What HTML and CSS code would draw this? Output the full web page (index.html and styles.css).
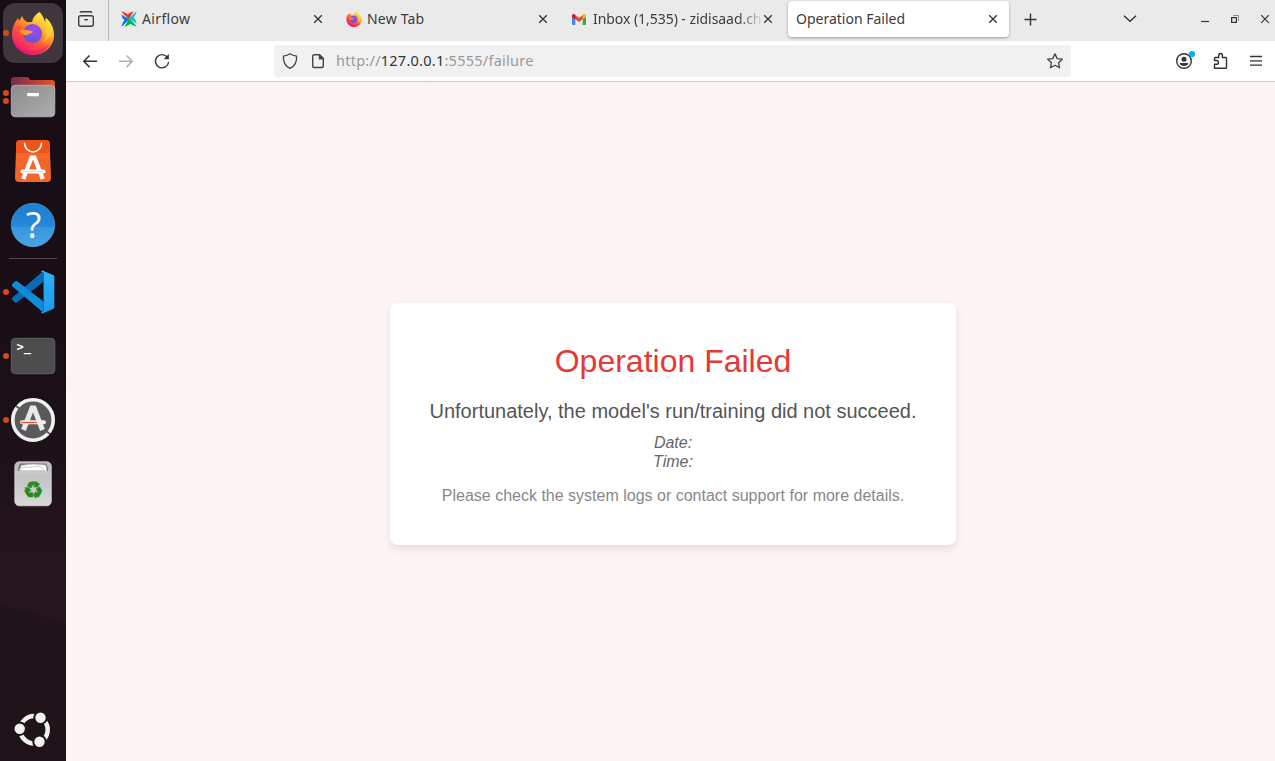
FILE: index.html
```html
<!DOCTYPE html>
<html lang="en">
<head>
<meta charset="utf-8">
<title>Operation Failed</title>
<link rel="stylesheet" href="styles.css">
</head>
<body>
<svg class="defs" width="0" height="0" aria-hidden="true">
  <defs>
    <linearGradient id="fox" x1="0.85" y1="0.1" x2="0.25" y2="0.95"><stop offset="0" stop-color="#fff44f"/><stop offset=".3" stop-color="#ffb52b"/><stop offset=".6" stop-color="#ff5b36"/><stop offset="1" stop-color="#f0137c"/></linearGradient>
    <radialGradient id="globe" cx=".6" cy=".3" r=".8"><stop offset="0" stop-color="#a14bf0"/><stop offset="1" stop-color="#5a55d8"/></radialGradient>
    <linearGradient id="folder" x1="0" x2="1"><stop offset="0" stop-color="#772953"/><stop offset="1" stop-color="#e8561f"/></linearGradient>
    <linearGradient id="grey" x1="0" y1="0" x2="1" y2="1"><stop offset="0" stop-color="#8c8c8c"/><stop offset="1" stop-color="#adadad"/></linearGradient>
    <linearGradient id="bin" x1="0" y1="0" x2="0" y2="1"><stop offset="0" stop-color="#b9b9b9"/><stop offset="1" stop-color="#d8d8d8"/></linearGradient>
    <linearGradient id="help" x1="0" y1="0" x2="0" y2="1"><stop offset="0" stop-color="#1c7fd3"/><stop offset=".53" stop-color="#2487d9"/><stop offset=".55" stop-color="#3796de"/><stop offset="1" stop-color="#4ba5e6"/></linearGradient>
    <linearGradient id="code" x1="0" y1="0" x2="0" y2="1"><stop offset="0" stop-color="#30b4f6"/><stop offset="1" stop-color="#1f97ec"/></linearGradient>
    <symbol id="firefox" viewBox="0 0 42 44">
      <path fill="url(#fox)" d="M27.500 1c2 2 4 5 5 9l1 1 .5-4c5 4 8 10 8 17 0 11-9 20-21 20S0 35 0 23c0-6 2-11 6-16l1 3 3-5c1 3 3 5 5 6h5c1-5 4-8 7.500-10z"/>
      <circle cx="20.500" cy="22.500" r="9.500" fill="url(#globe)"/>
      <path fill="#ff9a2e" d="M8 19.500c1.500-1.300 4-1 6.500-.500 2.500.3 4.500.5 6.300 1.500-1 2-3.300 2.200-5 3.200-2 1-4 .300-5.500-.7-1.300-1-2.300-2.200-2.300-3.500z"/>
      <path fill="#ffd43d" opacity=".6" d="M27.500 1c-3 6 1 9 4 13 4 5 3 12-1 17 6-2 10-8 9-14-1-5-4-7-6-10l-1 3c-1-3-2-6-5-9z"/>
      <path fill="#e8156e" opacity=".55" d="M2 31c6 10 25 13 36 1-6 15-29 16-36-1z"/>
    </symbol>
    <symbol id="close" viewBox="0 0 10 10"><path d="M1.200 1.200l7.600 7.600M8.800 1.200L1.200 8.800" fill="none" stroke="#333" stroke-width="1.300"/></symbol>
    <path id="blade" d="M.2.300C3 1 5.200 2.200 6.800 3.400 8.500 1.300 10.500.500 13 .700 10.700 2 10 4.700 8.300 8.200 6.200 6.700 3 4 .2.300z"/>
  </defs>
</svg>
<div class="desktop">
  <nav class="dock">
    <div class="app app-active">
      <i class="dots"><b></b></i>
      <svg class="fox-large"><use href="#firefox"/></svg>
    </div>
    <div class="app">
      <i class="dots"><b></b><b></b></i>
      <svg class="tile" viewBox="3 67 60 60">
        <path fill="url(#folder)" d="M14 77h13q2 0 3 3h22q3 0 3 3v20H11V80q0-3 3-3z"/>
        <rect x="11.300" y="85.300" width="43.500" height="31.500" rx="4" fill="url(#grey)" stroke="#b8b8b8" stroke-width=".8"/>
        <rect x="27" y="93" width="12" height="3.200" rx="1" fill="#fff"/>
      </svg>
    </div>
    <div class="app">
      <svg class="tile" viewBox="3 131 60 60">
        <path fill="#f4672b" d="M20 140h26q3.500 0 3.700 3l1.300 35q0 4-4 4H19q-4 0-4-4l1.300-35q.2-3 3.700-3z"/>
        <path fill="#ec5418" d="M20 140h26q3.500 0 3.700 3l.3 10H16l.3-10q.2-3 3.700-3z"/>
        <path fill="none" stroke="#fff" stroke-width="1.500" d="M24.500 142.500c0 12.500 17 12.500 17 0"/>
        <path fill="none" stroke="#fff" stroke-width="4.200" d="M23.300 179L31.500 157.500h3l8.200 21.500"/>
        <path fill="none" stroke="#fff" stroke-width="4" stroke-linecap="round" d="M22.500 171.500h21"/>
        <path stroke="#f8c3aa" stroke-width=".6" d="M22 171.500h22"/>
      </svg>
    </div>
    <div class="app">
      <svg class="tile" viewBox="3 195 60 60">
        <circle cx="33" cy="225" r="21.700" fill="url(#help)" stroke="#61afe7" stroke-width=".6"/>
        <text class="help" x="33.500" y="238">?</text>
      </svg>
    </div>
    <hr class="rule">
    <div class="app">
      <i class="dots"><b></b></i>
      <svg class="tile" viewBox="3 262 60 60">
        <path fill="#0a6ab5" d="M12.500 297.500l31-26.800v11L17 302.500q-1 .6-2 0l-2.700-2.500q-.8-1.200.2-2.500z"/>
        <path fill="#118bd8" d="M12.300 284l3-2.700q1-.6 2 0l26.200 20.200v11.300L12.500 286.500q-1-1.200-.2-2.500z"/>
        <path fill="url(#code)" d="M42.500 270.600l11 4.600q.8.400.8 1.200v31.200q0 .8-.8 1.200l-11 4.600q-1 .2-1.600-.8l2.700-1.600V272.500l-2.700-1z"/>
      </svg>
    </div>
    <div class="app">
      <i class="dots"><b></b></i>
      <svg class="tile" viewBox="3 326 60 60">
        <rect x="11.300" y="338.300" width="43.500" height="35.500" rx="4" fill="#4d4d4d" stroke="#6c6c6c" stroke-width=".8"/>
        <text class="prompt" x="16.500" y="350.500">&gt;_</text>
      </svg>
    </div>
    <div class="app">
      <i class="dots"><b></b></i>
      <svg class="tile" viewBox="3 390 60 60">
        <circle cx="33" cy="420" r="22" fill="#5a5a5a"/>
        <circle cx="33" cy="420" r="20.200" fill="none" stroke="#f0f0f0" stroke-width="3.600"/>
        <path stroke="#5a5a5a" stroke-width="1.600" d="M16 406l4 3M46 431l4 3"/>
        <path fill="none" stroke="#e8e8e8" stroke-width="5" d="M23.500 430L32 408h2l8.500 22"/>
        <path stroke="#f1f1f1" stroke-width="4" stroke-linecap="round" d="M22 422.300h22"/>
        <path stroke="#e95420" stroke-width="1.300" d="M21 422.500h16"/>
      </svg>
    </div>
    <div class="app">
      <svg class="tile" viewBox="3 454 60 60">
        <rect x="14.800" y="461.800" width="36.500" height="44" rx="4.500" fill="url(#bin)" stroke="#e1e1e1" stroke-width=".7"/>
        <path fill="#777" d="M20 463.500h26q2 2 2 8H18q0-6 2-8z"/>
        <path fill="#fff" stroke="#999" stroke-width=".5" d="M21 465.500q12-2.500 25-.5l1 6H19zM20 468l20-2 4 5H20z"/>
        <path fill="#c7c7c7" d="M16 471h34v4H16z"/>
        <text class="recycle" x="33" y="498">♻</text>
      </svg>
    </div>
    <div class="app app-launcher">
      <svg class="tile" viewBox="3 700 60 60">
        <circle cx="34" cy="729.700" r="13.700" fill="none" stroke="#f2f2f2" stroke-width="4.500"/>
        <g fill="#f2f2f2" stroke="#20131a" stroke-width="2"><circle cx="19.700" cy="728.700" r="6.200"/><circle cx="40.500" cy="717.700" r="6.200"/><circle cx="39.500" cy="741.700" r="6.200"/></g>
      </svg>
    </div>
  </nav>
  <div class="browser">
    <header class="tabstrip">
      <div class="view">
        <svg class="icon" viewBox="76 9 20 20"><g fill="none" stroke="#3d3d3d" stroke-width="1.400"><rect x="78.700" y="15.700" width="14.600" height="10.600" rx="2"/><path d="M80 12.700q.5-.9 1.500-.9h9q1 0 1.500.9"/><path d="M84.300 19.700h3.600"/></g></svg>
      </div>
      <div class="tab">
        <svg class="favicon" viewBox="0 0 16 16">
          <use href="#blade" fill="#e8391f"/>
          <use href="#blade" fill="#0cc6d6" transform="rotate(90 8 8)"/>
          <use href="#blade" fill="#04ad46" transform="rotate(180 8 8)"/>
          <use href="#blade" fill="#017cee" transform="rotate(270 8 8)"/>
        </svg>
        <span class="label label-airflow">Airflow</span>
        <svg class="close"><use href="#close"/></svg>
      </div>
      <div class="tab">
        <svg class="favicon"><use href="#firefox"/></svg>
        <span class="label label-new">New Tab</span>
        <svg class="close"><use href="#close"/></svg>
      </div>
      <div class="tab tab-inbox">
        <svg class="favicon" viewBox="0 0 16 16">
          <path fill="#4285f4" d="M1 5l3.300 2.500V14H2q-1 0-1-1z"/><path fill="#34a853" d="M15 5l-3.300 2.500V14H14q1 0 1-1z"/>
          <path fill="#ea4335" d="M3.500 3.500L8 7l4.500-3.500V7.500L8 11 3.500 7.500z"/><path fill="#c5221f" d="M1 6V4.500C1 2.500 3 2.500 4.300 3.700v4.500z"/><path fill="#fbbc04" d="M15 6V4.500c0-2-2-2-3.300-.8v4.500z"/>
        </svg>
        <span class="label label-inbox">Inbox (1,535) - zidisaad.ch</span>
        <svg class="close"><use href="#close"/></svg>
      </div>
      <div class="tab tab-current">
        <span class="label label-failed">Operation Failed</span>
        <svg class="close"><use href="#close"/></svg>
      </div>
      <svg class="icon new-tab" viewBox="1020 9 20 20"><path d="M1030.500 13.500v12M1024.500 19.500h12" stroke="#333" stroke-width="1.400"/></svg>
      <svg class="icon all-tabs" viewBox="1120 9 20 20"><path d="M1124 15.700l6 5.600 6-5.600" fill="none" stroke="#333" stroke-width="1.400"/></svg>
      <svg class="window-buttons" viewBox="1195 9 80 20"><g fill="none" stroke="#333" stroke-width="1.200"><path d="M1201 21.500h8"/><path stroke-width="1" stroke="#888" d="M1233 15.500h5.500v5.500"/><path d="M1231.600 17.600h4.800v4.800h-4.800z"/><path d="M1261.200 15.200l7.600 7.600M1268.800 15.200l-7.600 7.600"/></g></svg>
    </header>
    <div class="toolbar">
      <div class="nav-buttons">
        <svg class="icon" viewBox="80 51 20 20"><path d="M97 61.300H84M89.500 55.500l-5.700 5.800 5.700 5.800" fill="none" stroke="#333" stroke-width="1.500"/></svg>
        <svg class="icon" viewBox="116 51 20 20"><path d="M119 61.300h13M126.500 55.500l5.700 5.800-5.700 5.800" fill="none" stroke="#b0b0b0" stroke-width="1.500"/></svg>
        <svg class="icon" viewBox="152 51 20 20"><path d="M167.500 57.500A6.600 6.600 0 1 0 168.600 62" fill="none" stroke="#333" stroke-width="1.400"/><path fill="#333" d="M168.900 54v5.300h-5.300z"/></svg>
      </div>
      <div class="urlbar">
        <svg class="icon" viewBox="280 51 20 20"><path d="M290 53.800c2 1.400 4 2 6.600 2.400.4 5.300-1.600 9.800-6.600 12.200-5-2.400-7-6.900-6.600-12.200 2.600-.4 4.600-1 6.600-2.400z" fill="none" stroke="#444" stroke-width="1.300" stroke-linejoin="round"/></svg>
        <svg class="icon page-icon" viewBox="308 51 20 20"><path d="M319.500 54.700h-5q-1.800 0-1.800 1.800v9.200q0 1.800 1.800 1.800h7q1.800 0 1.800-1.800v-7.200z" fill="none" stroke="#444" stroke-width="1.400"/><path fill="#444" d="M318.800 54.200h1l4.200 4.200v1h-5.200z"/></svg>
        <span class="url">http://<span class="host">127.0.0.1</span>:5555/failure</span>
        <svg class="icon star" viewBox="1045 51 20 20"><path d="M1055 53.900l2.200 4.700 5.100.6-3.700 3.500.9 5.100-4.500-2.500-4.500 2.500.9-5.100-3.700-3.500 5.100-.6z" fill="none" stroke="#444" stroke-width="1.300" stroke-linejoin="round"/></svg>
      </div>
      <div class="tools">
        <svg class="icon" viewBox="1174 51 20 20"><circle cx="1184" cy="61" r="7.300" fill="none" stroke="#333" stroke-width="1.400"/><circle cx="1184" cy="59.200" r="2.500" fill="#333"/><path fill="#333" d="M1181 63h6q1.300 0 1.300 1-1.300 2-4.300 2t-4.300-2q0-1 1.300-1z"/><circle cx="1192" cy="54" r="3.100" fill="#00adff"/></svg>
        <svg class="icon" viewBox="1210 51 20 20"><path d="M1214.500 68.300v-4h1.700c3 0 3-3.800 0-3.800h-1.700v-2.200q0-.8.800-.8h3.400v-1.700c0-3 3.700-3 3.700 0v1.700h3.300q.8 0 .8.800v9.200q0 .8-.8.800z" fill="none" stroke="#333" stroke-width="1.400" stroke-linejoin="round"/></svg>
        <svg class="icon" viewBox="1246 51 20 20"><path d="M1250 56.500h12M1250 60.800h12M1250 65.200h12" stroke="#333" stroke-width="1.300"/></svg>
      </div>
    </div>
    <main class="page">
      <section class="card">
        <h1 class="title">Operation Failed</h1>
        <p class="message">Unfortunately, the model's run/training did not succeed.</p>
        <p class="stamp">Date:<br>Time:</p>
        <p class="hint">Please check the system logs or contact support for more details.</p>
      </section>
    </main>
  </div>
</div>
</body>
</html>
```
FILE: styles.css
```css
* { box-sizing: border-box; }
body { margin: 0; overflow: hidden; font-family: "Liberation Sans", Arial, sans-serif; }
.defs { position: absolute; }
svg { display: block; flex: none; }
.desktop { display: flex; width: 1275px; height: 761px; }

.dock {
  position: relative;
  z-index: 0;
  display: flex;
  flex-direction: column;
  gap: 4px;
  width: 66px;
  padding: 3px 3px 1px;
  background: linear-gradient(#170d14, #1a0f16 50%, #26151f 78%, #28161f);
}
.dock::after {
  content: "";
  position: absolute;
  z-index: -1;
  inset: 604px 0 0;
  background: #20131a;
  clip-path: polygon(0 0, 100% 20px, 100% 100%, 0 100%);
}
.app { position: relative; display: flex; align-items: center; justify-content: center; height: 60px; flex: none; }
.app-active { border-radius: 12px; background: #3f373d; }
.app-launcher { margin-top: auto; }
.tile { width: 60px; height: 60px; }
.fox-large { width: 42px; height: 44px; }
.dots { position: absolute; left: 0; top: 0; height: 60px; display: flex; flex-direction: column; justify-content: center; gap: 2px; }
.dots b { width: 6px; height: 6px; border-radius: 50%; background: #d4481b; }
.rule { width: 48px; height: 1px; margin: -1px auto; border: 0; background: #55494f; flex: none; }
.help { font: 36px "Open Sans", sans-serif; fill: #fff; text-anchor: middle; }
.prompt { font: bold 12px "DejaVu Sans Mono", monospace; fill: #fff; }
.recycle { font: 23px "DejaVu Sans", sans-serif; fill: #278a1c; stroke: #278a1c; stroke-width: .7px; text-anchor: middle; }

.browser { display: flex; flex-direction: column; flex: 1; min-width: 0; font-family: "Noto Sans", sans-serif; }
.tabstrip { display: flex; align-items: center; height: 41px; padding-bottom: 3px; background: #eaeaea; flex: none; }
.view { display: flex; align-items: center; width: 43px; height: 41px; margin: 0 4px -3px 0; padding: 0 0 3px 10px; border-right: 1px solid #b9b9b9; }
.icon { width: 20px; height: 20px; overflow: visible; }
.tab { display: flex; align-items: center; align-self: flex-start; width: 221px; height: 36px; margin: 1px 4px 0 0; padding: 0 11px 0 8px; flex: none; }
.tab-current { border-radius: 4px; background: #fff; box-shadow: 0 1px 3px rgba(0, 0, 0, .35); }
.favicon { width: 16px; height: 16px; margin-right: 5px; }
.label { flex: 1; white-space: nowrap; font-size: 14px; line-height: 20px; padding-bottom: 1px; color: #3c3c3c; }
.label-airflow { letter-spacing: .35px; }
.label-new { letter-spacing: .2px; }
.label-inbox { padding-left: 1px; -webkit-mask-image: linear-gradient(to right, #000 146px, transparent 172px); mask-image: linear-gradient(to right, #000 146px, transparent 172px); letter-spacing: -.05px; }
.close { width: 10px; height: 10px; }
.new-tab { margin-left: 7px; }
.all-tabs { margin-left: 80px; }
.window-buttons { width: 80px; height: 20px; margin-left: auto; }

.toolbar { display: flex; align-items: center; height: 41px; padding: 0 9px 1px 14px; border-bottom: 1px solid #c8c8c8; background: #fff; flex: none; }
.nav-buttons, .tools { display: flex; gap: 16px; }
.urlbar { display: flex; align-items: center; width: 797px; height: 32px; margin-left: 102px; padding: 0 6px; border-radius: 4px; background: #f1f1f1; }
.page-icon { margin-left: 8px; }
.url { margin-left: 8px; padding-bottom: 2px; font-size: 14.500px; letter-spacing: .25px; line-height: 20px; color: #999; white-space: nowrap; }
.host { color: #333; }
.star { margin-left: auto; }
.tools { margin-left: auto; }

.page { display: flex; align-items: center; justify-content: center; flex: 1; padding: 5px 0 0 5px; background: #fdf5f3; font-family: "Liberation Sans", Arial, sans-serif; }
.card { width: 566px; padding: 40px 0; border-radius: 8px; background: #fff; box-shadow: 0 4px 8px rgba(0, 0, 0, .1); text-align: center; white-space: nowrap; }
.title { margin: 0 0 20px; font-size: 32px; font-weight: 400; line-height: 37px; color: #e53935; }
.message { margin: 0 0 10px; font-size: 20px; line-height: 23px; color: #555; }
.stamp { margin: 0 0 16px; font-size: 16px; font-style: italic; line-height: 19px; color: #666; }
.hint { margin: 0; font-size: 16px; line-height: 18px; color: #888; }
```
